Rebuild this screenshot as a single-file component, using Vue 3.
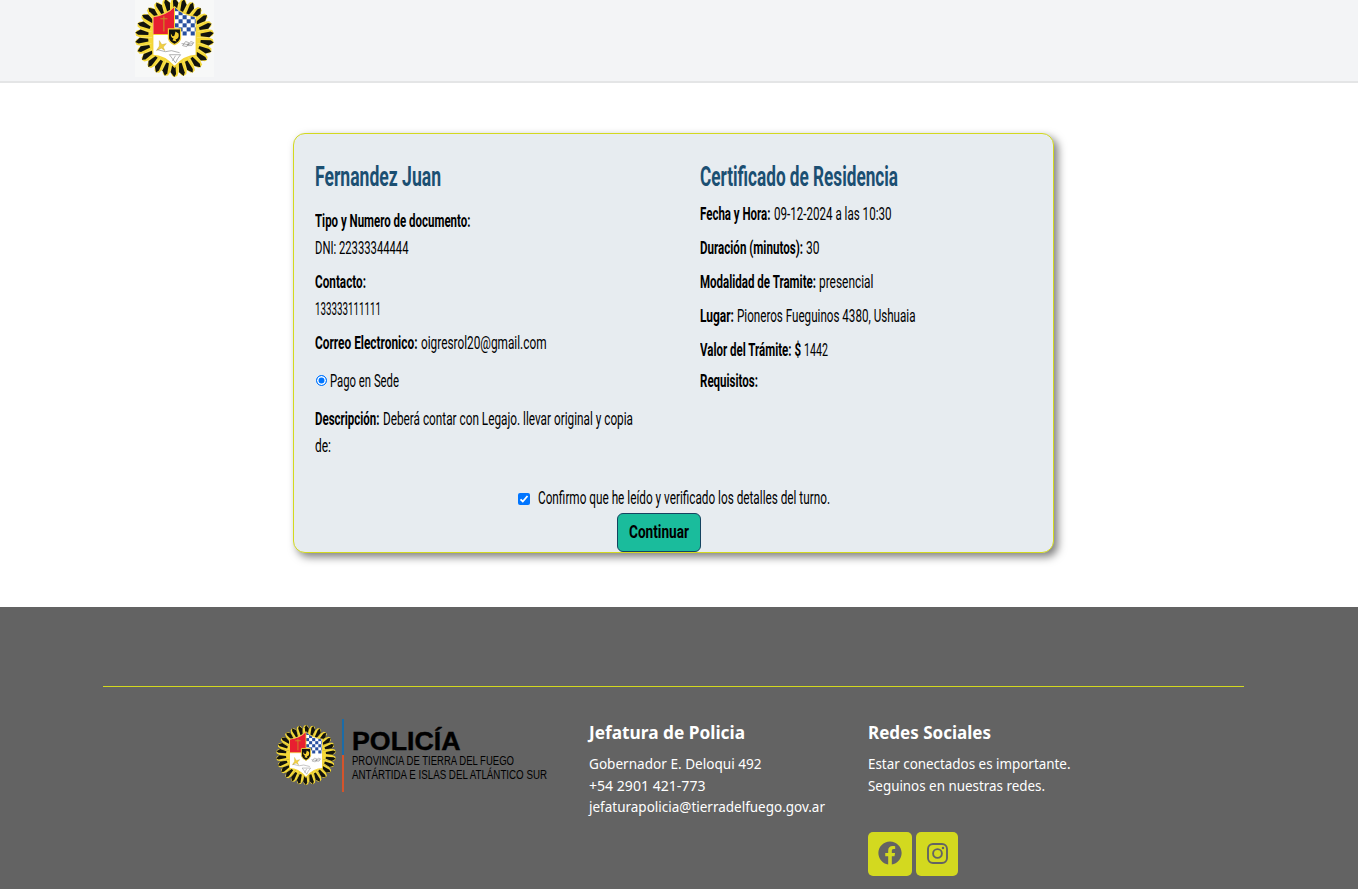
<script setup>
import { h } from 'vue'

// Footer text fitted to a fixed width
const Fit = (p) =>
  h('svg', { class: 'fit', width: p.w, height: p.h || 27 }, [
    h('text', { x: 0, y: p.b || 19, textLength: p.w, lengthAdjust: 'spacingAndGlyphs' }, p.t),
  ])
Fit.props = ['t', 'w', 'h', 'b']

// Condensed line: the label is scaled horizontally to its column width
const Slim = (p) =>
  h('span', { class: 'slim', style: { width: p.w + 'px' } }, [
    h('span', {
      class: 'line',
      onVnodeMounted: ({ el }) => {
        el.style.transform = `scaleX(${p.w / el.getBoundingClientRect().width})`
      },
    }, p.t),
  ])
Slim.props = ['t', 'w']

// Rays of the sun emblem
const COUNT = 26
const pt = (r, a) => `${(r * Math.sin(a)).toFixed(2)},${(-r * Math.cos(a)).toFixed(2)}`
const step = (Math.PI * 2) / COUNT
const rays = Array.from({ length: COUNT }, (_, i) => {
  const a = i * step
  return {
    yellow: `${pt(20, a - step * 0.5)} ${pt(34, a - step * 0.5)} ${pt(38, a - step * 0.3)} ${pt(39, a)} ${pt(38, a + step * 0.25)} ${pt(34, a + step * 0.5)} ${pt(20, a + step * 0.5)}`,
    black: `${pt(26, a - step * 0.12)} ${pt(36, a - step * 0.18)} ${pt(39, a + step * 0.02)} ${pt(34.5, a + step * 0.46)} ${pt(26, a + step * 0.3)}`,
  }
})
const checks = []
for (let r = 0; r < 7; r++) for (let c = 0; c < 6; c++) if ((r + c) % 2 === 0) checks.push({ x: c * 4, y: -30 + r * 4 })

const details = [
  ['Fecha y Hora:', 70.5, '09-12-2024 a las 10:30', 117.5],
  ['Duración (minutos):', 103, '30', 13.5],
  ['Modalidad de Tramite:', 116, 'presencial', 54.5],
  ['Lugar:', 34, 'Pioneros Fueguinos 4380, Ushuaia', 178.5],
  ['Valor del Trámite: $', 101, '1442', 24],
]
</script>

<template>
  <div class="page">
    <svg class="defs" width="0" height="0">
      <defs>
        <clipPath id="shieldClip">
          <path d="M0-30Q-7-22-21-20V17Q-10 17 0 28Q10 17 21 17V-20Q7-22 0-30Z" />
        </clipPath>
        <symbol id="emblem" viewBox="-39 -39 78 78">
          <polygon v-for="(r, i) in rays" :key="'y' + i" :points="r.yellow" fill="#f5d938" />
          <polygon v-for="(r, i) in rays" :key="'b' + i" :points="r.black" fill="#12130d" />
          <path d="M0-31Q-8-23-22-21V18Q-10 18 0 30Q10 18 22 18V-21Q8-23 0-31Z" fill="#f3d33a" />
          <g clip-path="url(#shieldClip)">
            <rect x="-22" y="-32" width="44" height="64" fill="#fff" />
            <rect x="-22" y="-32" width="22" height="29" fill="#e81f30" />
            <rect v-for="(c, i) in checks" :key="i" :x="c.x" :y="c.y" width="4" height="4" fill="#2850a0" />
          </g>
          <path d="M-22-3H-6M0-30V-9" stroke="#f3d33a" stroke-width="1" fill="none" />
          <path d="M-10.500-21V-6M-14-18.500H-7" stroke="#c98a25" stroke-width="1.200" fill="none" />
          <path d="M-6-8.500H6V1Q5 5 0 7Q-5 5-6 1Z" fill="#11120e" stroke="#f3d33a" stroke-width="1.2" />
          <path d="M-3.500-4Q-2 0 0-2L1-6L4-4Q5 1 1 2L2 4L-2 3L-1 1Q-4 0-3.500-4Z" fill="#f5cf31" />
          <path d="M-15 3L-12.500 7L-8 6L-11 9.500L-9.500 13L-13 10.500L-18 13L-15 8.500Z" fill="#f0cf43" stroke="#b79a33" stroke-width=".3" />
          <path d="M-17 12L-9 14L-3 13L5 15M-5 17L6 17L3 21L1 25L-2 21ZM1 18L-2 23M8 8L11 4L14 5L12 9ZM13 8L16 4L19 5L17 8ZM7 6L13 7L18 6" fill="none" stroke="#666" stroke-width=".5" />
        </symbol>
      </defs>
    </svg>

    <header class="header">
      <div class="brand"><svg class="brand-logo" width="79" height="79"><use href="#emblem" width="79" height="79" /></svg></div>
    </header>

    <main class="main">
      <section class="card">
        <div class="columns">
          <div class="column">
            <Slim class="title" t="Fernandez Juan" :w="126" />
            <div class="row first"><Slim class="b" t="Tipo y Numero de documento:" :w="155.5" /></div>
            <div class="row tight"><Slim t="DNI: 22333344444" :w="93.5" /></div>
            <div class="row"><Slim class="b" t="Contacto:" :w="51" /></div>
            <div class="row tight"><Slim t="133333111111" :w="66" /></div>
            <div class="row"><Slim class="b" t="Correo Electronico:" :w="102.5" /><Slim t="oigresrol20@gmail.com" :w="125.5" /></div>
            <label class="row wide"><span class="radio"></span><Slim t="Pago en Sede" :w="69" /></label>
            <div class="row wide"><Slim class="b" t="Descripción:" :w="64.5" /><Slim t="Deberá contar con Legajo. llevar original y copia" :w="250" /></div>
            <div class="row tight"><Slim t="de:" :w="16" /></div>
          </div>
          <div class="column">
            <Slim class="title" t="Certificado de Residencia" :w="198" />
            <div v-for="d in details" :key="d[0]" class="row">
              <Slim class="b" :t="d[0]" :w="d[1]" /><Slim :t="d[2]" :w="d[3]" />
            </div>
            <div class="row near"><Slim class="b" t="Requisitos:" :w="58" /></div>
          </div>
        </div>
        <label class="confirm">
          <svg class="check" width="12" height="12" viewBox="0 0 12 12">
            <rect width="12" height="12" rx="2" fill="#0075ff" />
            <path d="M2.500 6.300L4.800 8.500L9.500 3" fill="none" stroke="#fff" stroke-width="1.800" />
          </svg>
          <Slim t="Confirmo que he leído y verificado los detalles del turno." :w="292" />
        </label>
        <button class="continue"><Slim class="b" t="Continuar" :w="60" /></button>
      </section>
    </main>

    <footer class="footer">
      <hr class="rule" />
      <div class="foot">
        <div class="police">
          <svg width="60" height="60"><use href="#emblem" width="60" height="60" /></svg>
          <span class="bar"></span>
          <div class="names">
            <Fit class="police-name" t="POLICÍA" w="108.500" h="33" b="31" />
            <Fit class="police-sub" t="PROVINCIA DE TIERRA DEL FUEGO" w="162" h="14" b="12.5" />
            <Fit class="police-sub" t="ANTÁRTIDA E ISLAS DEL ATLÁNTICO SUR" w="195" h="14" b="12.5" />
          </div>
        </div>
        <div class="contact">
          <Fit class="foot-title" t="Jefatura de Policia" w="156" h="30" b="20" />
          <Fit class="foot-text" t="Gobernador E. Deloqui 492" w="172.500" h="21.6" b="20" />
          <Fit class="foot-text" t="+54 2901 421-773" w="116.500" h="21.6" b="20" />
          <Fit class="foot-text" t="jefaturapolicia@tierradelfuego.gov.ar" w="236" h="21.6" b="20" />
        </div>
        <div class="social">
          <Fit class="foot-title" t="Redes Sociales" w="123" h="30" b="20" />
          <Fit class="foot-text" t="Estar conectados es importante." w="202.500" h="21.6" b="20" />
          <Fit class="foot-text" t="Seguinos en nuestras redes." w="177" h="21.6" b="20" />
          <div class="buttons">
            <a class="btn fb">
              <svg width="24" height="24" viewBox="0 0 512 512" fill="#636363"><path d="M504 256C504 119 393 8 256 8S8 119 8 256c0 123.780 90.690 226.380 209.250 245V327.690h-63V256h63v-54.640c0-62.150 37-96.480 93.670-96.480 27.140 0 55.520 4.840 55.520 4.840v61h-31.280c-30.800 0-40.410 19.120-40.410 38.730V256h68.780l-11 71.690h-57.780V501C413.310 482.380 504 379.780 504 256z" /></svg>
            </a>
            <a class="btn ig">
              <svg width="21" height="21" viewBox="0 0 21 21" fill="none" stroke="#636363" stroke-width="1.900"><rect x="1" y="1" width="19" height="19" rx="5" /><circle cx="10.500" cy="10.500" r="4.400" /><circle cx="16" cy="5" r="1.250" fill="#636363" stroke="none" /></svg>
            </a>
          </div>
        </div>
      </div>
    </footer>
  </div>
</template>

<style>
body { margin: 0; background: #fff; }
</style>

<style scoped>
.page { width: 100%; height: 889px; overflow: hidden; display: flex; flex-direction: column; font-family: Roboto, "Liberation Sans", sans-serif; }
.defs { position: absolute; }
.fit { display: block; flex: none; overflow: visible; fill: currentColor; }
.slim { display: block; flex: none; height: 27px; line-height: 26px; font-family: Roboto, "Liberation Sans", sans-serif; font-size: 17.5px; font-weight: 400; text-align: left; white-space: nowrap; }
.slim :deep(.line) { display: inline-block; transform-origin: 0 50%; }
.header { height: 83px; flex: none; box-sizing: border-box; background: #f3f4f6; padding-left: 135px; border-bottom: 2px solid #e4e5e6; }
.brand { width: 79px; height: 77px; background: #f7f8f8; overflow: hidden; }
.brand-logo { display: block; margin-top: -2px; }
.main { height: 524px; flex: none; padding: 50px 0 0 293px; box-sizing: border-box; }
.card { width: 761px; height: 420px; box-sizing: border-box; border: 1px solid #d3d91f; border-radius: 12px; background: #e7ecf0; box-shadow: 4px 4px 8px rgba(0, 0, 0, .5); color: #000; display: flex; flex-direction: column; }
.columns { height: 351px; flex: none; box-sizing: border-box; padding: 26px 0 0 21px; display: grid; grid-template-columns: 385px 1fr; }
.title { height: 34px; line-height: 33px; font-size: 27.500px; font-weight: 700; color: #1b4f72; }
.row { display: flex; gap: 3px; height: 27px; margin-top: 7px; }
.row.first { margin-top: 14px; }
.row.tight { margin-top: 0; }
.row.wide { margin-top: 11px; }
.row.near { margin-top: 4px; }
.b { font-weight: 700; }
.radio { width: 11px; height: 11px; box-sizing: border-box; border: 1px solid #0075ff; border-radius: 50%; background: #0075ff; box-shadow: inset 0 0 0 1.500px #fff; margin: 7px 0 0 1px; }
.confirm { display: flex; gap: 8px; height: 28px; margin-left: 224px; }
.check { margin-top: 8px; }
.continue { width: 84px; height: 39px; box-sizing: border-box; margin: 0 0 0 323px; padding: 0 0 0 11px; border: 1px solid #154360; border-radius: 6px; background: #1abc9c; color: #000; }
.footer { flex: 1; background: #636363; color: #fff; }
.rule { width: 1141px; height: 1px; margin: 79px 0 0 103px; border: 0; background: #d3d91f; }
.foot { display: grid; grid-template-columns: 313px 279px 1fr; padding: 32px 0 0 276px; }
.police { display: flex; height: 73px; align-items: center; }
.police > svg { flex: none; margin-top: -1px; }
.bar { flex: none; width: 2px; height: 73px; margin: 0 7px 0 6px; background: linear-gradient(#1b6ca8 50%, #d5542b 50%); }
.names { height: 73px; padding-left: .5px; color: #000; }
.police-name { font-family: "Liberation Sans", sans-serif; font-size: 25.500px; font-weight: 700; stroke: #000; stroke-width: .4px; }
.police-sub { font-family: "Liberation Sans", sans-serif; font-size: 12.500px; }
.foot-title { font-family: "Noto Sans", sans-serif; font-size: 18px; font-weight: 700; }
.foot-text { font-family: "Noto Sans", sans-serif; font-size: 14px; }
.buttons { display: flex; gap: 4px; margin-top: 39.800px; }
.btn { height: 44px; border-radius: 5px; background: #d3d91f; display: flex; align-items: center; justify-content: center; }
.fb { width: 44px; }
.ig { width: 42px; }
.btn svg { margin-top: -1px; }
</style>
